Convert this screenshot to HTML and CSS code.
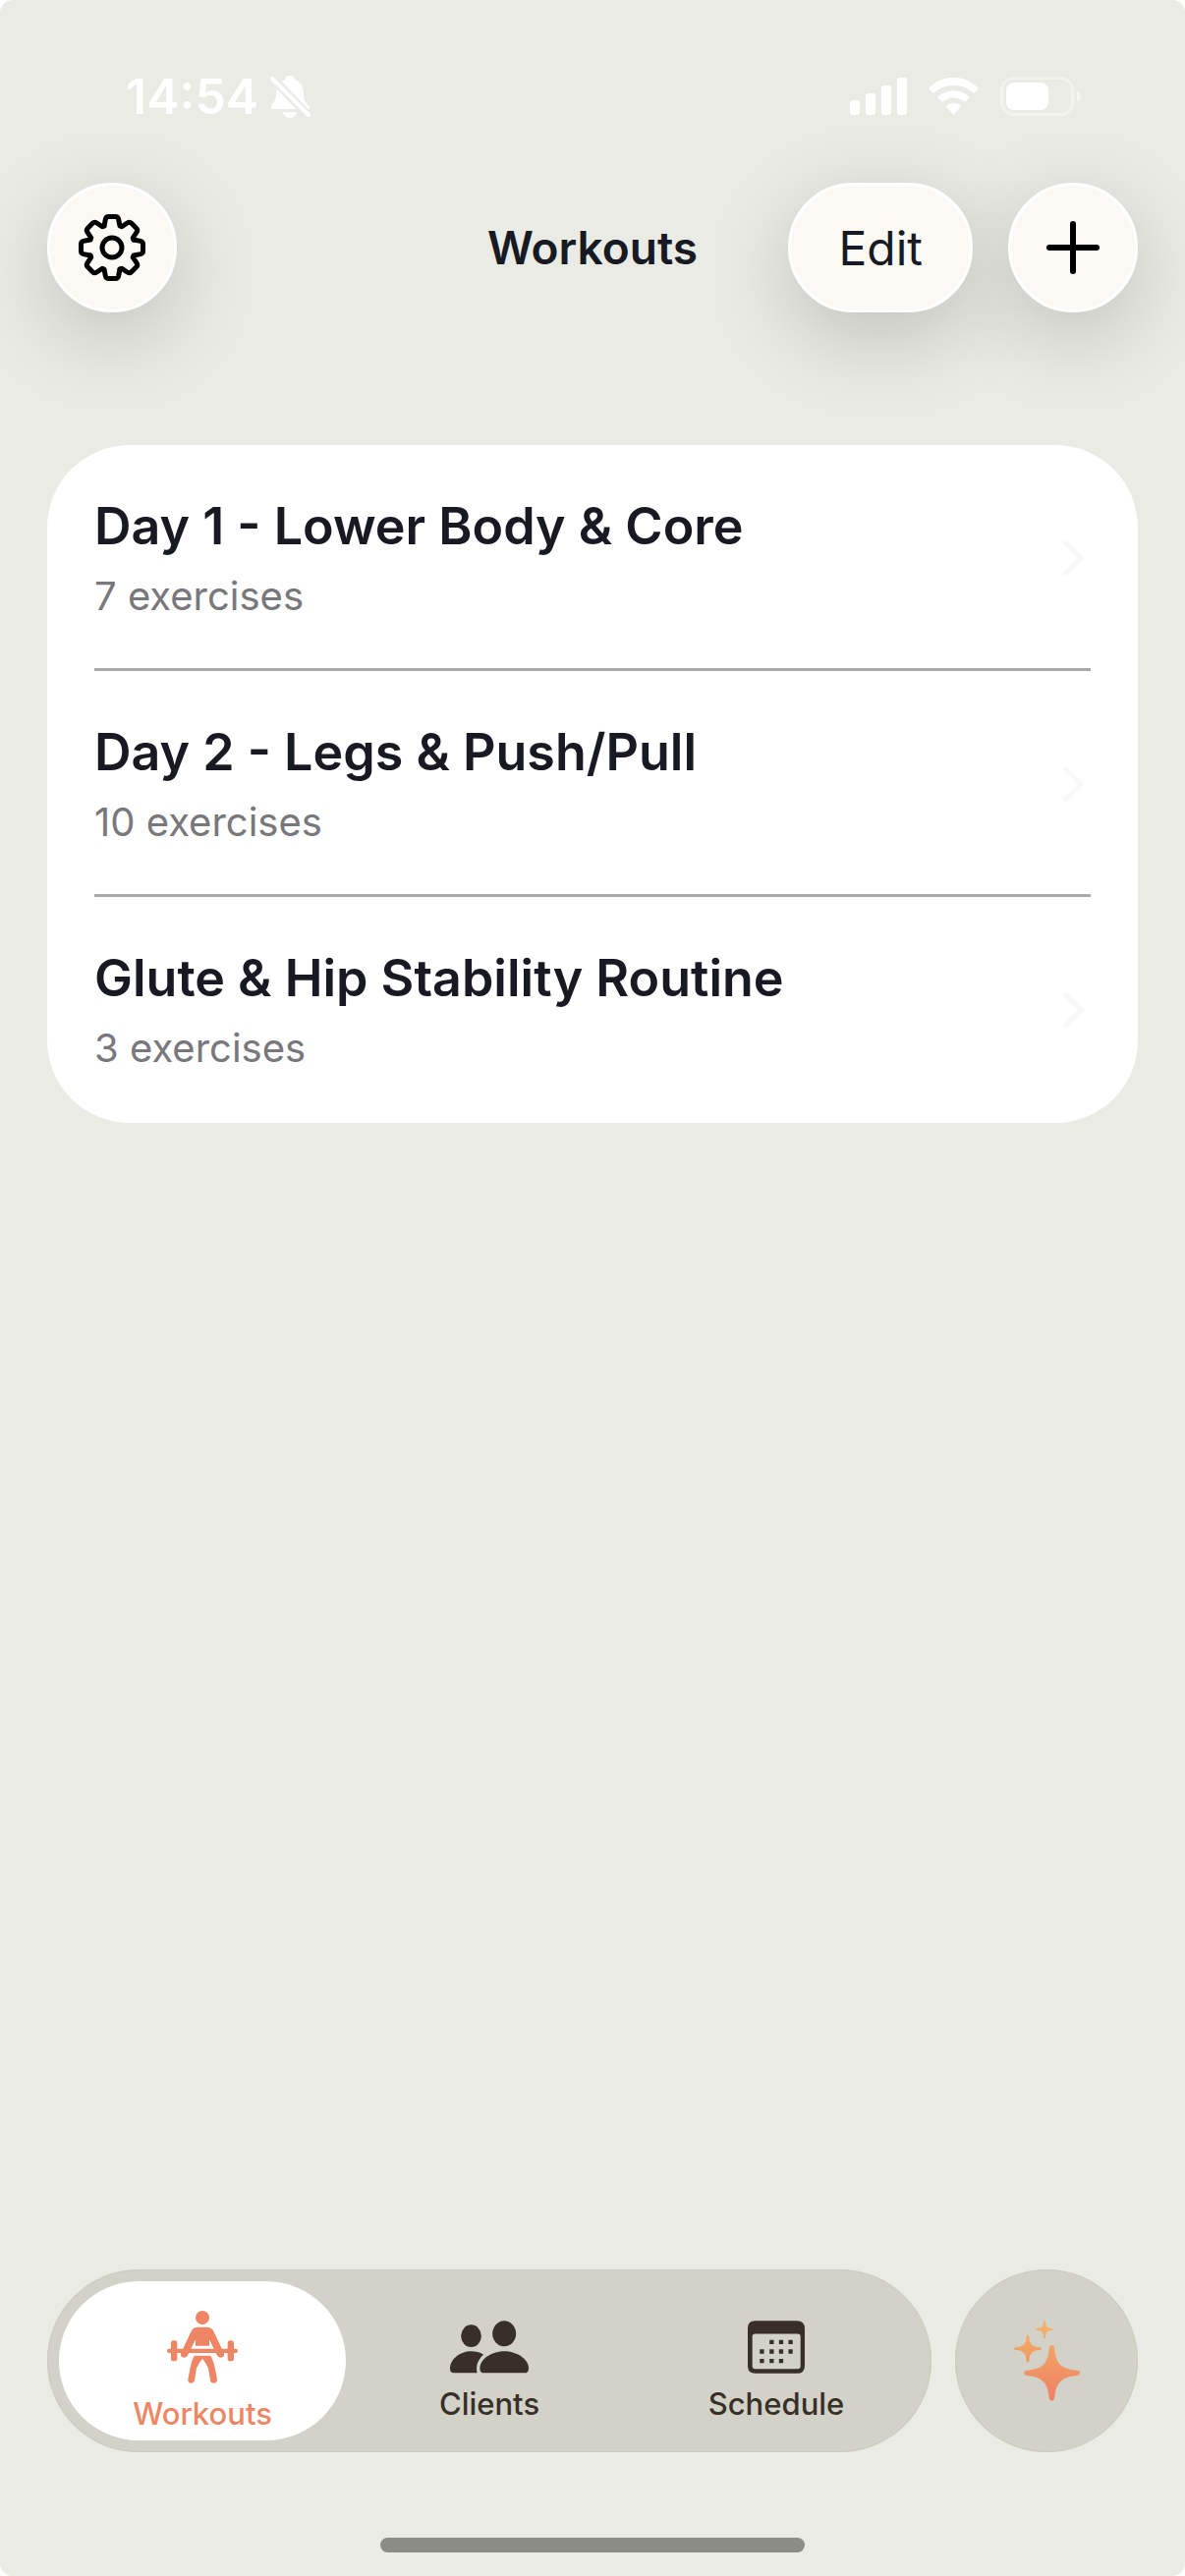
FILE: index.html
```html
<!DOCTYPE html>
<html lang="en">
<head>
  <meta charset="UTF-8" />
  <meta name="viewport" content="width=device-width, initial-scale=1" />
  <title>Workouts</title>
  <link rel="stylesheet" href="styles.css">
</head>
<body>
  <div class="screen">
    <div class="status-bar">
      <div class="status-left">
        <span class="time">14:54</span>
        <svg class="bell" viewBox="0 0 41 43" width="41" height="43">
          <path d="M20 0c3 0 5 2 5 4 6 2 9 8 9 15 0 8 3 9 6 13v2H1c-1-6 5-6 5-15C6 12 9 6 15 4c0-2 2-4 5-4z" fill="#fff"/>
          <path d="M13 37h14c-1 8-13 8-14 0z" fill="#fff"/>
          <path d="M0 0L41 43" stroke="#eaebe4" stroke-width="9"/>
          <path d="M2 3L39 40" stroke="#fff" stroke-width="4" stroke-linecap="round"/>
        </svg>
      </div>
      <div class="status-right">
        <svg viewBox="0 0 58 38" width="58" height="38" fill="#fff">
          <rect x="0" y="23" width="10" height="15" rx="3"/>
          <rect x="16" y="16" width="10" height="22" rx="3"/>
          <rect x="32" y="8" width="10" height="30" rx="3"/>
          <rect x="48" y="0" width="10" height="38" rx="3"/>
        </svg>
        <svg class="wifi" viewBox="0 0 51 38" width="51" height="38" fill="#fff">
          <path d="M0 11C14-4 37-4 51 11l-5 5C34 5 17 5 5 16z"/>
          <path d="M9 20c9-9 24-9 33 0l-5 5c-7-6-16-6-23 0z"/>
          <path d="M17.500 29c5-4 11-4 16 0L25.500 38z"/>
        </svg>
        <svg class="battery" viewBox="0 0 82 40" width="82" height="40">
          <rect x="1.500" y="1.500" width="72" height="37" rx="12" fill="none" stroke="#fff" stroke-opacity="0.4" stroke-width="3"/>
          <rect x="6" y="6" width="43" height="28" rx="8" fill="#fff"/>
          <path d="M78 14c5 2 5 10 0 12z" fill="#fff" fill-opacity="0.5"/>
        </svg>
      </div>
    </div>

    <header class="header">
      <button class="glass-btn round" aria-label="Settings">
        <svg viewBox="-35 -35 70 70" width="70" height="70" fill="none" stroke="#000" stroke-width="5" stroke-linejoin="round" stroke-linecap="round">
          <path id="teeth" d="M-8-22L-6.600-29Q-6-31.500-3.500-31.500L3.500-31.500Q6-31.500 6.600-29L8-22L9.900-21.200L15.800-25.200Q18-26.500 19.800-24.700L24.700-19.800Q26.500-18 25.200-15.800L21.200-9.900L22-8"/>
          <use href="#teeth" transform="rotate(90)"/>
          <use href="#teeth" transform="rotate(180)"/>
          <use href="#teeth" transform="rotate(270)"/>
          <circle r="10"/>
        </svg>
      </button>
      <h1 class="title">Workouts</h1>
      <div class="actions">
        <button class="glass-btn edit">Edit</button>
        <button class="glass-btn round" aria-label="Add workout">
          <svg viewBox="0 0 54 54" width="54" height="54" stroke="#000" stroke-width="6" stroke-linecap="round">
            <path d="M27 3V51M3 27H51"/>
          </svg>
        </button>
      </div>
    </header>

    <main>
      <ul class="card">
        <li>
          <a href="#" class="row">
            <span class="row-text">
              <span class="row-title">Day 1 - Lower Body &amp; Core</span>
              <span class="row-sub">7 exercises</span>
            </span>
            <svg class="chevron" viewBox="0 0 22 36" width="22" height="36"><path d="M3 3L18 18L3 33"/></svg>
          </a>
        </li>
        <li>
          <a href="#" class="row">
            <span class="row-text">
              <span class="row-title">Day 2 - Legs &amp; Push/Pull</span>
              <span class="row-sub">10 exercises</span>
            </span>
            <svg class="chevron" viewBox="0 0 22 36" width="22" height="36"><path d="M3 3L18 18L3 33"/></svg>
          </a>
        </li>
        <li>
          <a href="#" class="row">
            <span class="row-text">
              <span class="row-title">Glute &amp; Hip Stability Routine</span>
              <span class="row-sub">3 exercises</span>
            </span>
            <svg class="chevron" viewBox="0 0 22 36" width="22" height="36"><path d="M3 3L18 18L3 33"/></svg>
          </a>
        </li>
      </ul>
    </main>

    <footer class="bottom">
      <nav class="tabs">
        <button class="tab active">
          <svg viewBox="420 190 216 222" width="72" height="74" fill="currentColor">
            <circle cx="528" cy="211" r="21"/>
            <path d="M515 240H541Q556 240 562 252L593 318Q597 328 589 332Q580 336 574 328L549 278V297H507V278L482 328Q476 336 467 332Q459 328 463 318L494 252Q500 240 515 240Z"/>
            <rect x="420" y="306" width="216" height="13" rx="6"/>
            <rect x="432" y="281" width="19" height="63" rx="8"/>
            <rect x="605" y="281" width="19" height="63" rx="8"/>
            <path d="M503 327H553Q563 345 566 363L573 399Q573 410 563 411Q554 411 552 402L546 365Q538 348 528 336Q518 348 510 365L504 402Q502 411 493 411Q483 410 484 399L491 363Q494 345 503 327Z"/>
          </svg>
          <span>Workouts</span>
        </button>
        <button class="tab">
          <svg viewBox="174 212 240 162" width="80" height="54" fill="currentColor">
            <ellipse cx="238.500" cy="259" rx="31" ry="34"/>
            <ellipse cx="339.500" cy="252" rx="36" ry="39"/>
            <path d="M186 372Q174 372 174 359C174 330 205 306 238 306Q260 306 276 316C258 332 252 352 257 372Z"/>
            <path d="M278 372Q265 372 265 358C265 330 300 306 339 306C379 306 414 330 414 358Q414 372 401 372Z"/>
          </svg>
          <span>Clients</span>
        </button>
        <button class="tab">
          <svg viewBox="1083 219 175 162" width="58" height="54" fill="currentColor">
            <path fill-rule="evenodd" d="M1107 219H1234Q1258 219 1258 243V357Q1258 381 1234 381H1107Q1083 381 1083 357V243Q1083 219 1107 219ZM1106 259Q1097 259 1097 268V358Q1097 367 1106 367H1236Q1245 367 1245 358V268Q1245 259 1236 259Z"/>
            <path d="M1150 278h13v13h-13zM1179 278h13v13h-13zM1208 278h13v13h-13zM1120 307h13v13h-13zM1150 307h13v13h-13zM1179 307h13v13h-13zM1208 307h13v13h-13zM1120 336h13v13h-13zM1150 336h13v13h-13zM1179 336h13v13h-13z"/>
          </svg>
          <span>Schedule</span>
        </button>
      </nav>
      <button class="ai-btn" aria-label="Assistant">
        <svg viewBox="456 218 201 244" width="67" height="82" fill="url(#spark)">
          <defs>
            <linearGradient id="spark" gradientUnits="userSpaceOnUse" x1="0" y1="218" x2="0" y2="462">
              <stop offset="0" stop-color="#f4b469"/>
              <stop offset="1" stop-color="#ef8062"/>
            </linearGradient>
          </defs>
          <path d="M563.500 300Q564 292 571.500 292Q579 292 579.500 300C584 350 600 364 649 369Q657 370 657 377Q657 384 649 385C600 390 584 406 579.500 455Q578 462 571.500 462Q565 462 563.500 455C559 406 543 390 494 385Q486 384 486 377Q486 370 494 369C543 364 559 350 563.500 300Z"/>
          <path d="M494 266Q494 261 498 261Q502 261 502 266C504 290 511 297 535 299Q540 300 540 303Q540 306 535 307C511 309 504 316 502 340Q502 345 498 345Q494 345 494 340C492 316 485 309 461 307Q456 306 456 303Q456 300 461 299C485 297 492 290 494 266Z"/>
          <path d="M546 221Q546 218 549 218Q552 218 552 221C553 236 557 240 572 241Q576 242 576 244Q576 246 572 247C557 248 553 252 552 267Q552 271 549 271Q546 271 546 267C545 252 541 248 526 247Q522 246 522 244Q522 242 526 241C541 240 545 236 546 221Z"/>
        </svg>
      </button>
    </footer>
    <div class="home-indicator"></div>
  </div>
</body>
</html>
```
FILE: styles.css
```css
* {
  box-sizing: border-box;
}

body {
  margin: 0;
  background: #fff;
  font-family: Inter, 'Liberation Sans', sans-serif;
  color: #171a23;
}

button {
  border: none;
  padding: 0;
  font-family: inherit;
  color: inherit;
  cursor: pointer;
}

svg {
  display: block;
}

.screen {
  display: flex;
  flex-direction: column;
  min-height: 100vh;
  padding: 64px 48px 24px;
  border-radius: 13px;
  background: #eaebe4;
  overflow: hidden;
}

/* Status bar */
.status-bar {
  display: flex;
  justify-content: space-between;
  align-items: center;
  height: 68px;
  padding: 0 58px 0 80px;
  color: #fff;
  position: relative;
  z-index: 1;
}

.status-left,
.status-right {
  display: flex;
  align-items: center;
}

.status-left {
  gap: 12px;
}

.status-right {
  gap: 22px;
}

.time {
  font-size: 50px;
  font-weight: 600;
  line-height: 68px;
}

/* Header */
.header {
  display: grid;
  grid-template-columns: 1fr auto 1fr;
  align-items: center;
  margin-top: 54px;
  isolation: isolate;
}

.title {
  margin: 0;
  font-size: 46px;
  font-weight: 600;
  line-height: 60px;
}

.actions {
  display: flex;
  justify-content: flex-end;
  gap: 36px;
}

.glass-btn {
  position: relative;
  display: flex;
  justify-content: center;
  align-items: center;
  height: 132px;
  border: 3px solid #fff;
  border-radius: 66px;
  background: #faf9f4;
}

/* shadow sits under all the buttons */
.glass-btn::before {
  content: '';
  position: absolute;
  inset: 0;
  z-index: -1;
  border-radius: 66px;
  box-shadow: 0 24px 90px rgba(0, 0, 0, 0.2);
}

.glass-btn.round {
  width: 132px;
}

.glass-btn.edit {
  padding: 0 48px;
  font-size: 48px;
}

/* Workout list */
main {
  flex: 1;
  margin-top: 135px;
}

.card {
  margin: 0;
  padding: 0 48px 3px;
  list-style: none;
  background: #fff;
  border-radius: 84px;
}

.card li + li {
  border-top: 3px solid #a9a9a9;
}

.row {
  display: flex;
  justify-content: space-between;
  align-items: center;
  padding: 48px 6px 46px 0;
  color: inherit;
  text-decoration: none;
}

.row-text {
  display: flex;
  flex-direction: column;
  gap: 10px;
}

.row-title {
  font-size: 52px;
  font-weight: 600;
  line-height: 69px;
}

.row-sub {
  font-size: 40px;
  line-height: 54px;
  color: #77777c;
}

.chevron {
  fill: none;
  stroke: #f8f8fb;
  stroke-width: 5;
  stroke-linecap: round;
  stroke-linejoin: round;
}

/* Bottom bar */
.bottom {
  display: flex;
  gap: 24px;
  margin-bottom: 87px;
}

.tabs {
  flex: 1;
  display: flex;
  padding: 12px;
  border-radius: 93px;
  background: #d2d2c8;
}

.tab {
  flex: 1;
  display: flex;
  flex-direction: column;
  justify-content: center;
  align-items: center;
  gap: 12px;
  height: 162px;
  padding-top: 22px;
  border-radius: 81px;
  background: none;
  color: #382f28;
  font-size: 31px;
  font-weight: 500;
  line-height: 38px;
}

.tab.active {
  background: #fff;
  color: #ee8665;
}

.ai-btn {
  display: flex;
  justify-content: center;
  align-items: center;
  width: 186px;
  height: 186px;
  border-radius: 50%;
  background: #d2d2c8;
}

.tabs,
.ai-btn {
  box-shadow: inset 0 0 0 1px #cbcbc0;
}

.home-indicator {
  align-self: center;
  width: 432px;
  height: 15px;
  border-radius: 8px;
  background: #8c8c86;
}
```
